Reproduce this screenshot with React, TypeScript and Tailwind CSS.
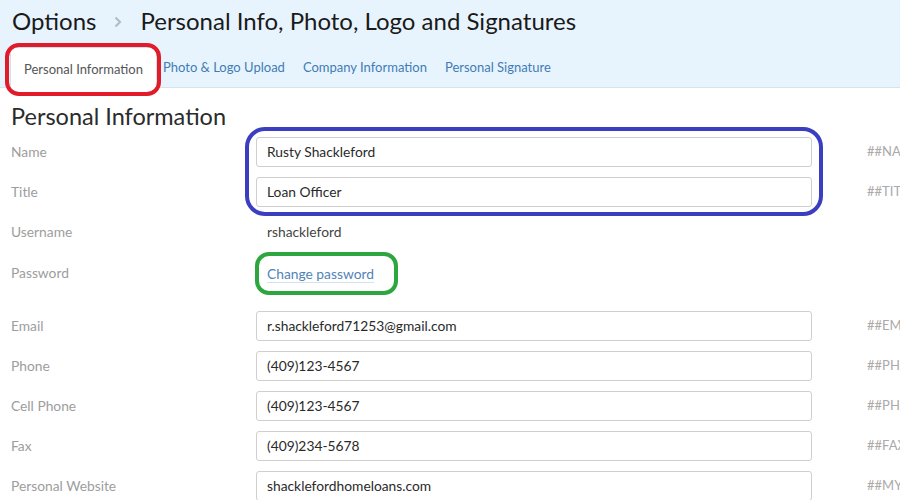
import React from 'react';

const rows = [
  { label: 'Name', value: 'Rusty Shackleford', tag: '##NAME##' },
  { label: 'Title', value: 'Loan Officer', tag: '##TITLE##' },
];

const contactRows = [
  { label: 'Email', value: 'r.shackleford71253@gmail.com', tag: '##EMAIL##' },
  { label: 'Phone', value: '(409)123-4567', tag: '##PHONE##' },
  { label: 'Cell Phone', value: '(409)123-4567', tag: '##PHONECELL##' },
  { label: 'Fax', value: '(409)234-5678', tag: '##FAX##' },
  { label: 'Personal Website', value: 'shacklefordhomeloans.com', tag: '##MYWEBSITE##' },
];

const FieldRow: React.FC<{ label: string; value: string; tag: string }> = ({ label, value, tag }) => (
  <div className="flex items-center h-[40px]">
    <div className="w-[245px] shrink-0 text-[13.8px] text-[#9d9d9d]">{label}</div>
    <div className="w-[556px] shrink-0 h-[30px] border border-[#cfcfcf] rounded-[3px] bg-white flex items-center px-[10px] text-[13.8px] text-[#2a2a2a]">
      {value}
    </div>
    <div className="ml-[55px] text-[13px] text-[#aaa] whitespace-nowrap">{tag}</div>
  </div>
);

export default function App() {
  const tabs = ['Photo & Logo Upload', 'Company Information', 'Personal Signature'];

  return (
    <div className="relative w-[900px] h-[500px] overflow-hidden bg-white font-['Lato','Liberation_Sans',sans-serif]">
      {/* Header band */}
      <div className="h-[88px] bg-[#e8f4fd] border-b border-[#d9e3ea] flex flex-col">
        <div className="flex items-center h-[42px] pl-[12px] text-[24px] text-[#1a1a1a]">
          <span>Options</span>
          <svg className="mx-[18px] mt-[2px]" width="8" height="12" viewBox="0 0 8 12">
            <path d="M1.5 1.5 L6 6 L1.5 10.5" fill="none" stroke="#b5bcc2" strokeWidth="2.2" />
          </svg>
          <span>Personal Info, Photo, Logo and Signatures</span>
        </div>
        <div className="flex items-end h-[46px] pl-[10px]">
          <div className="h-[41px] pt-[3px] px-[13px] flex items-center bg-white border border-b-0 border-[#d3e0ea] rounded-t-[3px] text-[13px] text-[#555] -mb-px">
            Personal Information
          </div>
          <div className="flex items-center h-[41px] pt-[3px] text-[13px] text-[#3f7cb7] gap-[18px] ml-[6px]">
            {tabs.map(t => (
              <span key={t}>{t}</span>
            ))}
          </div>
        </div>
      </div>

      {/* Content */}
      <div className="pl-[11px]">
        <h2 className="pt-[14px] h-[44px] text-[23.5px] leading-[28px] text-[#2b2b2b]">Personal Information</h2>
        {rows.map(r => (
          <FieldRow key={r.label} {...r} />
        ))}
        <div className="flex items-center h-[40px]">
          <div className="w-[245px] shrink-0 text-[13.8px] text-[#9d9d9d]">Username</div>
          <div className="pl-[11px] text-[13.8px] text-[#444]">rshackleford</div>
        </div>
        <div className="flex items-center h-[41px] pt-[2px]">
          <div className="w-[245px] shrink-0 text-[13.8px] text-[#9d9d9d]">Password</div>
          <div className="ml-[11px] text-[13.8px] text-[#5283b8] border-b border-[#d5e2ee] leading-[17px]">
            Change password
          </div>
        </div>
        <div className="h-[13px]" />
        {contactRows.map(r => (
          <FieldRow key={r.label} {...r} />
        ))}
      </div>

      {/* Annotation ovals */}
      <div className="absolute left-[5px] top-[43px] w-[156px] h-[53px] border-[4px] border-[#e21b2b] rounded-[14px]" />
      <div className="absolute left-[245px] top-[127px] w-[578px] h-[89px] border-[4px] border-[#3b3fbf] rounded-[20px]" />
      <div className="absolute left-[255px] top-[252px] w-[143px] h-[43px] border-[4px] border-[#2ea63f] rounded-[14px]" />
    </div>
  );
}
